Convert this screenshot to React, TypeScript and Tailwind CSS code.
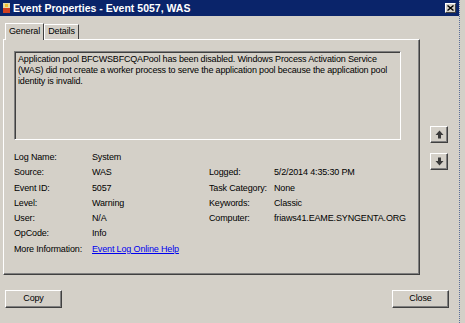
import React from "react";

const left = [
  ["Log Name:", "System"],
  ["Source:", "WAS"],
  ["Event ID:", "5057"],
  ["Level:", "Warning"],
  ["User:", "N/A"],
  ["OpCode:", "Info"],
];

const right = [
  ["Logged:", "5/2/2014 4:35:30 PM"],
  ["Task Category:", "None"],
  ["Keywords:", "Classic"],
  ["Computer:", "friaws41.EAME.SYNGENTA.ORG"],
];

function Btn({ children }: { children: React.ReactNode }) {
  return (
    <div className="w-[57px] h-[18px] flex items-center justify-center border border-t-white border-l-white border-r-[#404040] border-b-[#404040] shadow-[inset_-1px_-1px_0_#808080] text-black">
      {children}
    </div>
  );
}

function Arrow({ up }: { up?: boolean }) {
  return (
    <div className="w-[18px] h-[17px] flex items-center justify-center border border-t-white border-l-white border-r-[#404040] border-b-[#404040] shadow-[inset_-1px_-1px_0_#808080]">
      <svg width="9" height="9" viewBox="0 0 9 9" className={up ? "" : "rotate-180"}>
        <path d="M4.5 0.5 L8.5 5 L6 5 L6 8.5 L3 8.5 L3 5 L0.5 5 Z" fill="#3a3a3a" />
      </svg>
    </div>
  );
}

export default function App() {
  return (
    <div className="w-[465px] h-[323px] bg-[#d4d0c8] overflow-hidden font-['Liberation_Sans',sans-serif] text-[9px] tracking-[-0.15px] text-black">
      <div className="w-[460px] h-[323px] border-r border-dotted border-r-[#5a6e9a] flex flex-col">
        {/* title bar */}
        <div className="h-[16px] bg-[#0a246a] flex items-center pl-[2px] pr-[3px] tracking-normal">
          <svg width="9" height="12" viewBox="0 0 9 12" className="mr-[2px]">
            <rect x="1" y="1" width="7" height="10" fill="#e8d9a0" />
            <rect x="1" y="6" width="7" height="5" fill="#d04020" />
            <rect x="3" y="2" width="3" height="3" fill="#f0c030" />
          </svg>
          <span className="text-white font-bold text-[10.5px] leading-none">Event Properties - Event 5057, WAS</span>
          <div className="ml-auto w-[11px] h-[10px] bg-[#d4d0c8] border border-t-white border-l-white border-r-[#404040] border-b-[#404040] flex items-center justify-center">
            <svg width="7" height="6" viewBox="0 0 7 6">
              <path d="M0.5 0.5 L6.5 5.5 M6.5 0.5 L0.5 5.5" stroke="#000" strokeWidth="1.4" />
            </svg>
          </div>
        </div>

        <div className="flex pl-[3px] pt-[6px]">
          <div className="flex flex-col">
            {/* tabs */}
            <div className="flex items-end h-[17px] pl-[2px]">
              <div className="h-[17px] w-[39px] flex items-center justify-center border border-b-0 border-t-white border-l-white border-r-[#404040] bg-[#d4d0c8] relative z-10 -mb-px pb-[1px]">
                General
              </div>
              <div className="h-[15px] w-[35px] flex items-center justify-center border border-b-0 border-t-white border-l-white border-r-[#404040]">
                Details
              </div>
            </div>
            {/* panel */}
            <div className="w-[417px] h-[236px] border border-t-white border-l-white border-r-[#404040] border-b-[#404040] shadow-[inset_-1px_-1px_0_#808080] pl-[10px] pt-[11px]">
              <div className="w-[387px] h-[89px] border border-t-[#808080] border-l-[#808080] border-r-white border-b-white shadow-[inset_1px_1px_0_#404040] px-[3px] pt-[2px] leading-[11px] tracking-[-0.17px]">
                Application pool BFCWSBFCQAPool has been disabled. Windows Process Activation Service (WAS) did not create a worker process to serve the application pool because the application pool identity is invalid.
              </div>
              <div className="flex mt-[10px] leading-[15.3px] whitespace-nowrap">
                <div className="flex flex-col w-[195px]">
                  {left.map(([k, v]) => (
                    <div key={k} className="flex">
                      <span className="w-[78px]">{k}</span>
                      <span>{v}</span>
                    </div>
                  ))}
                  <div className="flex">
                    <span className="w-[78px]">More Information:</span>
                    <span className="text-[#0000ee] underline">Event Log Online Help</span>
                  </div>
                </div>
                <div className="flex flex-col mt-[15.3px]">
                  {right.map(([k, v]) => (
                    <div key={k} className="flex">
                      <span className="w-[65px]">{k}</span>
                      <span>{v}</span>
                    </div>
                  ))}
                </div>
              </div>
            </div>
          </div>
          <div className="flex flex-col gap-[10px] ml-[10px] mt-[104px]">
            <Arrow up />
            <Arrow />
          </div>
        </div>

        <div className="flex justify-between pl-[5px] pr-[10px] mt-[15px]">
          <Btn>Copy</Btn>
          <Btn>Close</Btn>
        </div>
      </div>
    </div>
  );
}
